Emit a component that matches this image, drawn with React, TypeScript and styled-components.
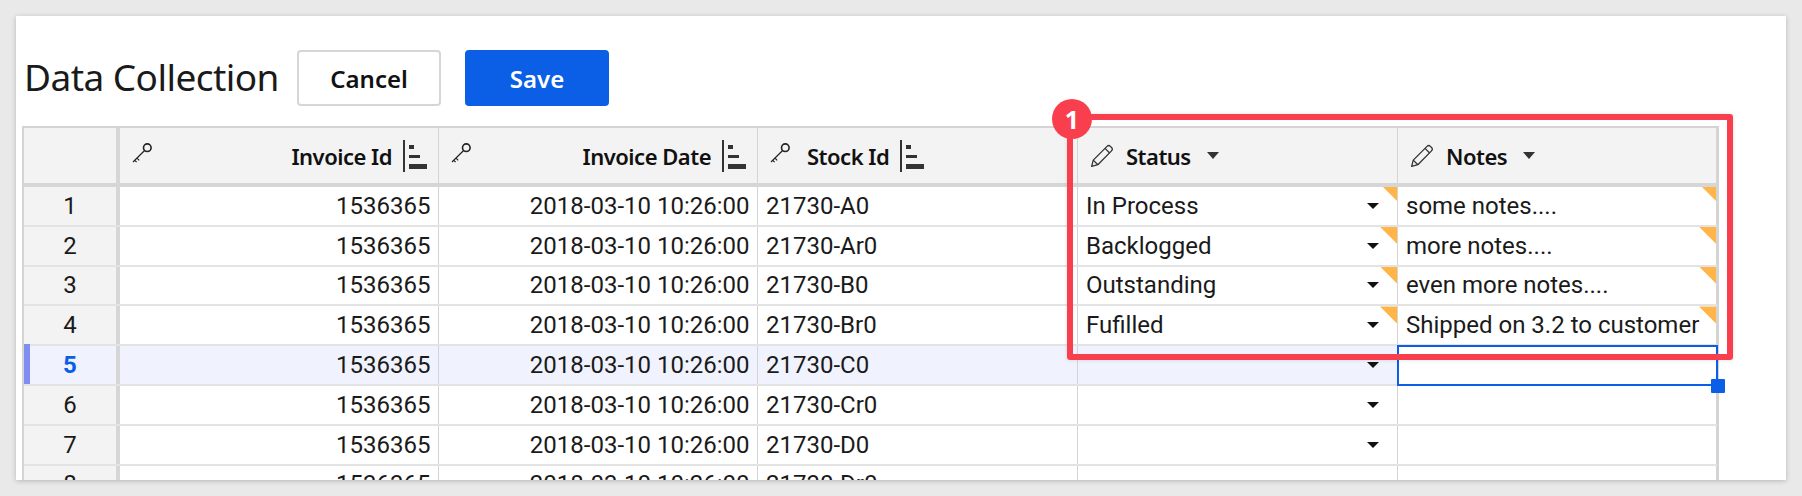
import React from 'react';
import styled, { createGlobalStyle } from 'styled-components';

const GlobalStyle = createGlobalStyle`
  html, body {
    margin: 0;
    padding: 0;
    height: 496px;
    overflow: hidden;
    background: #e9e9e9;
  }
`;

const rows = [
  { id: 1, stock: '21730-A0', status: 'In Process', notes: 'some notes....' },
  { id: 2, stock: '21730-Ar0', status: 'Backlogged', notes: 'more notes....' },
  { id: 3, stock: '21730-B0', status: 'Outstanding', notes: 'even more notes....' },
  { id: 4, stock: '21730-Br0', status: 'Fufilled', notes: 'Shipped on 3.2 to customer' },
  { id: 5, stock: '21730-C0', status: '', notes: '' },
  { id: 6, stock: '21730-Cr0', status: '', notes: '' },
  { id: 7, stock: '21730-D0', status: '', notes: '' },
  { id: 8, stock: '21730-Dr0', status: '', notes: '' },
];

const KeyIcon = () => (
  <svg width="20" height="20" viewBox="0 0 20 20" fill="none" stroke="#222" strokeWidth="1.2">
    <circle cx="15.3" cy="4.7" r="3.8" strokeWidth="1.6" />
    <path d="M12.6 7.5 1 19M5 15.2l2.2 2.2M2.8 17.4l1.8 1.8" />
  </svg>
);

const PencilIcon = () => (
  <svg width="24" height="24" viewBox="0 0 22 22" fill="none" stroke="#333" strokeWidth="1.2" strokeLinejoin="round">
    <path d="M1.5 20.5 3 14.8 15.6 2.2a2.2 2.2 0 0 1 3.1 0l1 1a2.2 2.2 0 0 1 0 3.1L7.2 19z" />
    <path d="M3 14.8 7.2 19M13.8 4l4.2 4.2" />
  </svg>
);

const SortIcon = () => (
  <svg width="24" height="32" viewBox="0 0 24 32" fill="#333">
    <rect x="0" y="0" width="2" height="32" />
    <rect x="6" y="5" width="5" height="4" />
    <rect x="6" y="15" width="11" height="3" />
    <rect x="6" y="24" width="18" height="5" />
  </svg>
);

const Card = styled.div`
  position: relative;
  box-sizing: border-box;
  margin: 16px 0 0 16px;
  width: 1770px;
  height: 464px;
  padding: 34px 0 0 6px;
  overflow: hidden;
  background: #fff;
  box-shadow: 0 1px 5px rgba(0, 0, 0, 0.22);
`;

const Toolbar = styled.div`
  display: flex;
  align-items: center;
  height: 56px;
  padding-left: 2px;
  margin-bottom: 20px;
`;

const Title = styled.h1`
  margin: 0 19px 4px 0;
  width: 254px;
  font: 400 37px 'Noto Sans', sans-serif;
  letter-spacing: -0.55px;
  color: #1a1a1a;
  white-space: nowrap;
`;

const Button = styled.button<{ $primary?: boolean }>`
  box-sizing: border-box;
  width: 144px;
  height: 56px;
  margin-right: 24px;
  border: 2px solid ${(p) => (p.$primary ? '#0a5fe6' : '#d6d6d6')};
  border-radius: 4px;
  background: ${(p) => (p.$primary ? '#0a5fe6' : '#fff')};
  color: ${(p) => (p.$primary ? '#fff' : '#111')};
  font: 600 24px 'Noto Sans', sans-serif;
`;

const Table = styled.div`
  box-sizing: border-box;
  width: 1697px;
  border: solid #d4d4d4;
  border-width: 2px 2px 0;
`;

const HeaderRow = styled.div`
  display: grid;
  grid-template-columns: 96px 319px 319px 320px 320px 319px;
  height: 59px;
  box-sizing: border-box;
  background: #f3f3f3;
  border-bottom: 4px solid #d6d6d6;
`;

const HeaderCell = styled.div<{ $end?: boolean }>`
  display: flex;
  align-items: center;
  justify-content: ${(p) => (p.$end ? 'flex-end' : 'flex-start')};
  padding: 0 11px 0 12px;
  border-right: 1px solid #d4d4d4;
  font: 600 22px 'Noto Sans', sans-serif;
  letter-spacing: -0.5px;
  color: #111;
  white-space: nowrap;
`;

const CornerCell = styled.div`
  border-right: 4px solid #d6d6d6;
`;

const KeySlot = styled.span<{ $push?: boolean }>`
  display: flex;
  margin: 0 ${(p) => (p.$push ? 'auto' : '17px')} 5px 0;
`;

const PencilSlot = styled.span`
  display: flex;
  margin-right: 12px;
`;

const SortSlot = styled.span`
  display: flex;
  margin-left: 11px;
`;

const HeaderCaret = styled.span<{ $gap: number }>`
  margin-left: ${(p) => p.$gap}px;
  border-left: 6.5px solid transparent;
  border-right: 6.5px solid transparent;
  border-top: 7px solid #333;
`;

const Row = styled.div<{ $active?: boolean }>`
  display: grid;
  grid-template-columns: 96px 319px 319px 320px 320px 319px;
  height: 39.8px;
  box-sizing: border-box;
  border-bottom: 2px solid #e3e3e3;
  background: ${(p) => (p.$active ? '#f0f3fd' : '#fff')};
  font: 400 24px Roboto, sans-serif;
  color: #1a1a1a;
`;

const NumberCell = styled.div<{ $active?: boolean }>`
  position: relative;
  display: flex;
  align-items: center;
  justify-content: center;
  border-right: 4px solid #d6d6d6;
  background: ${(p) => (p.$active ? '#f0f3fd' : '#f3f3f3')};
  color: ${(p) => (p.$active ? '#0a5fe6' : '#1a1a1a')};
  font-weight: ${(p) => (p.$active ? 700 : 400)};
`;

const ActiveMark = styled.span`
  position: absolute;
  left: 0;
  top: -2px;
  bottom: 0;
  width: 6px;
  background: #7f8ef0;
`;

const Cell = styled.div<{ $end?: boolean; $selected?: boolean }>`
  position: relative;
  display: flex;
  align-items: center;
  justify-content: ${(p) => (p.$end ? 'flex-end' : 'space-between')};
  padding: 0 7.5px 0 8px;
  border-right: 1px solid #d4d4d4;
  background: ${(p) => (p.$selected ? '#fff' : 'transparent')};
  white-space: nowrap;
`;

const SelectedFrame = styled.span`
  position: absolute;
  left: -1px;
  right: -2px;
  top: -1px;
  bottom: -2px;
  border: 2px solid #0a5fe6;
  z-index: 1;
`;

const FillHandle = styled.span`
  position: absolute;
  right: -9px;
  bottom: -9px;
  width: 14px;
  height: 14px;
  border-radius: 1px;
  background: #0a5fe6;
`;

const Flag = styled.span<{ $size: number }>`
  position: absolute;
  top: 0;
  right: 0;
  width: ${(p) => p.$size}px;
  height: ${(p) => p.$size}px;
  background: #ffb547;
  clip-path: polygon(0 0, 100% 0, 100% 100%);
`;

const Caret = styled.span`
  margin-right: 11px;
  margin-left: auto;
  border-left: 6.5px solid transparent;
  border-right: 6.5px solid transparent;
  border-top: 6px solid #111;
`;

const Callout = styled.div`
  position: absolute;
  left: 1051px;
  top: 98px;
  width: 666px;
  height: 246px;
  box-sizing: border-box;
  border: 6px solid #f93f4d;
  border-radius: 3px;
  box-shadow: 0 0 4px rgba(0, 0, 0, 0.12);
  z-index: 2;
`;

const Badge = styled.div`
  position: absolute;
  left: 1036px;
  top: 83px;
  width: 40px;
  height: 40px;
  display: flex;
  align-items: center;
  justify-content: center;
  border-radius: 50%;
  background: #f93f4d;
  color: #fff;
  font: 700 25px 'Noto Sans', sans-serif;
  z-index: 3;
`;

export default function App() {
  return (
    <>
      <GlobalStyle />
      <Card>
        <Toolbar>
          <Title>Data Collection</Title>
          <Button>Cancel</Button>
          <Button $primary>Save</Button>
        </Toolbar>
        <Table>
          <HeaderRow>
            <CornerCell />
            <HeaderCell $end>
              <KeySlot $push><KeyIcon /></KeySlot>
              Invoice Id
              <SortSlot><SortIcon /></SortSlot>
            </HeaderCell>
            <HeaderCell $end>
              <KeySlot $push><KeyIcon /></KeySlot>
              Invoice Date
              <SortSlot><SortIcon /></SortSlot>
            </HeaderCell>
            <HeaderCell>
              <KeySlot><KeyIcon /></KeySlot>
              Stock Id
              <SortSlot><SortIcon /></SortSlot>
            </HeaderCell>
            <HeaderCell>
              <PencilSlot><PencilIcon /></PencilSlot>
              Status
              <HeaderCaret $gap={16} />
            </HeaderCell>
            <HeaderCell>
              <PencilSlot><PencilIcon /></PencilSlot>
              Notes
              <HeaderCaret $gap={16} />
            </HeaderCell>
          </HeaderRow>
          {rows.map((row) => {
            const active = row.id === 5;
            const flagSize = row.id === 1 ? 14 : 17;
            return (
              <Row key={row.id} $active={active}>
                <NumberCell $active={active}>
                  {active && <ActiveMark />}
                  {row.id}
                </NumberCell>
                <Cell $end>1536365</Cell>
                <Cell $end>2018-03-10 10:26:00</Cell>
                <Cell>{row.stock}</Cell>
                <Cell>
                  {row.status}
                  <Caret />
                  {row.status && <Flag $size={flagSize} />}
                </Cell>
                <Cell $selected={active}>
                  {row.notes}
                  {row.notes && <Flag $size={flagSize} />}
                  {active && (
                    <SelectedFrame>
                      <FillHandle />
                    </SelectedFrame>
                  )}
                </Cell>
              </Row>
            );
          })}
        </Table>
        <Callout />
        <Badge>1</Badge>
      </Card>
    </>
  );
}
